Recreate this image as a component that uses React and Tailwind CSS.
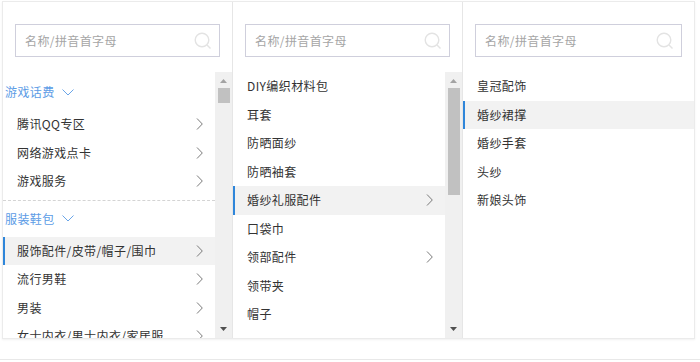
import React from "react";

const font = { fontFamily: '"Noto Sans CJK SC", "Noto Sans", sans-serif' };

const col1Groups = [
  {
    title: "游戏话费",
    items: ["腾讯QQ专区", "网络游戏点卡", "游戏服务"],
  },
  {
    title: "服装鞋包",
    items: ["服饰配件/皮带/帽子/围巾", "流行男鞋", "男装", "女士内衣/男士内衣/家居服"],
  },
];

const col2Items = [
  { name: "DIY编织材料包" },
  { name: "耳套" },
  { name: "防晒面纱" },
  { name: "防晒袖套" },
  { name: "婚纱礼服配件", more: true, active: true },
  { name: "口袋巾" },
  { name: "领部配件", more: true },
  { name: "领带夹" },
  { name: "帽子" },
];

const col3Items = ["皇冠配饰", "婚纱裙撑", "婚纱手套", "头纱", "新娘头饰"];

const ChevronRight = () => (
  <svg width="7" height="12" viewBox="0 0 7 12" className="shrink-0">
    <polyline points="1,0.5 6.3,6 1,11.5" fill="none" stroke="#7a7a7a" strokeWidth="1" />
  </svg>
);

const ChevronDown = () => (
  <svg width="12" height="7" viewBox="0 0 12 7" className="ml-[7px]">
    <polyline points="0.5,0.5 6,6 11.5,0.5" fill="none" stroke="#6aa5e8" strokeWidth="1" />
  </svg>
);

const SearchBox = () => (
  <div className="h-[70px] px-3 pt-[22px] shrink-0">
    <div className="h-[33px] border border-[#cfcfdc] flex items-center justify-between pl-[9px] pr-[7px]">
      <span className="text-[12px] tracking-[0.4px] text-[#a5a5a5]">名称/拼音首字母</span>
      <svg width="18" height="18" viewBox="0 0 18 18">
        <circle cx="8" cy="8" r="6.8" fill="none" stroke="#e3e3e3" strokeWidth="1.4" />
        <line x1="13" y1="13" x2="16.5" y2="16.5" stroke="#e3e3e3" strokeWidth="1.4" />
      </svg>
    </div>
  </div>
);

const ScrollBar = ({ thumbTop, thumbHeight }) => (
  <div className="w-[17px] shrink-0 bg-[#f0f0f0] flex flex-col items-center justify-between pt-[7px] pb-[7px]">
    <div className="flex flex-col items-center w-full">
      <svg width="7" height="4" viewBox="0 0 7 4">
        <polygon points="3.5,0 7,4 0,4" fill="#a3a3a3" />
      </svg>
      <div
        className="w-[12px] bg-[#c1c1c1]"
        style={{ marginTop: thumbTop, height: thumbHeight }}
      />
    </div>
    <svg width="7" height="4" viewBox="0 0 7 4">
      <polygon points="0,0 7,0 3.5,4" fill="#505050" />
    </svg>
  </div>
);

const Row = ({ label, more, active }) => (
  <div
    className={
      "h-[28.5px] flex items-center justify-between pl-3 pr-3 border-l-2 " +
      (active ? "bg-[#f2f2f2] border-[#2f86da]" : "border-transparent")
    }
  >
    <span className="text-[12px] tracking-[0.4px] text-[#333] whitespace-nowrap">{label}</span>
    {more && <ChevronRight />}
  </div>
);

export default function App() {
  return (
    <div className="w-[700px] h-[362px] bg-white overflow-hidden pt-px pl-[2px]" style={font}>
      <div className="w-[693px] h-[338px] flex border border-[#ebebeb] shadow-[0_1px_2px_rgba(0,0,0,0.06)]">
        {/* column 1 */}
        <div className="w-[230px] flex flex-col border-r border-[#e6e6e6]">
          <SearchBox />
          <div className="flex flex-1 min-h-0">
            <div className="flex-1 overflow-hidden">
              {col1Groups.map((g, gi) => (
                <div
                  key={g.title}
                  className={gi === 0 ? "pt-[2px] pb-1 border-b border-dashed border-[#d4d4d4]" : ""}
                >
                  <div className="h-9 flex items-center pl-[2px]">
                    <span className="text-[12px] tracking-[0.4px] text-[#5c9ce6]">{g.title}</span>
                    <ChevronDown />
                  </div>
                  {g.items.map((it) => (
                    <Row key={it} label={it} more active={it === "服饰配件/皮带/帽子/围巾"} />
                  ))}
                </div>
              ))}
            </div>
            <ScrollBar thumbTop={5} thumbHeight={15} />
          </div>
        </div>

        {/* column 2 */}
        <div className="w-[230px] flex flex-col border-r border-[#e6e6e6]">
          <SearchBox />
          <div className="flex flex-1 min-h-0">
            <div className="flex-1 overflow-hidden">
              {col2Items.map((it) => (
                <Row key={it.name} label={it.name} more={it.more} active={it.active} />
              ))}
            </div>
            <ScrollBar thumbTop={5} thumbHeight={107} />
          </div>
        </div>

        {/* column 3 */}
        <div className="flex-1 flex flex-col">
          <SearchBox />
          <div className="flex-1 overflow-hidden">
            {col3Items.map((it) => (
              <Row key={it} label={it} active={it === "婚纱裙撑"} />
            ))}
          </div>
        </div>
      </div>
      <div className="mt-[20px] -ml-[2px] border-t border-[#e8e8e8]" />
    </div>
  );
}
